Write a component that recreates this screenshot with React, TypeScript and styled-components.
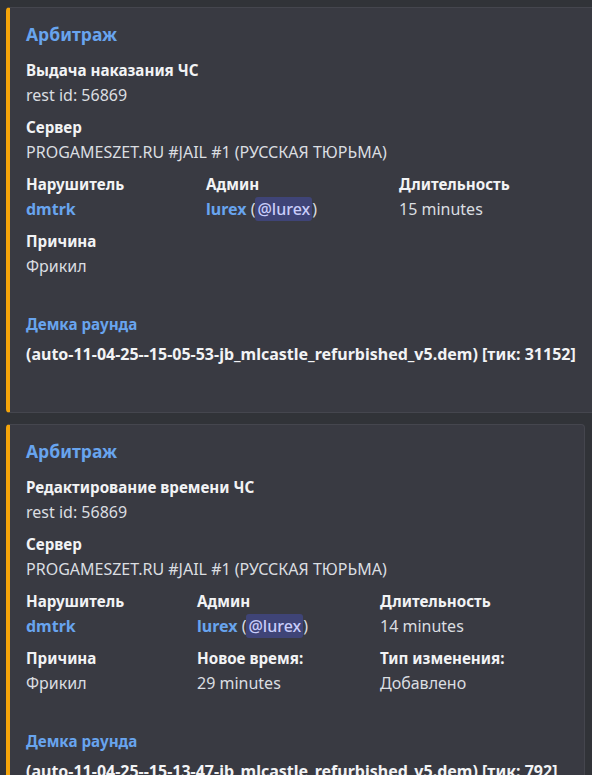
import React from 'react'
import styled, { createGlobalStyle } from 'styled-components'

const GlobalStyle = createGlobalStyle`
  html, body {
    margin: 0;
    padding: 0;
    background: #313338;
    overflow: hidden;
  }
  body {
    font-family: "Noto Sans", "Liberation Sans", sans-serif;
    -webkit-font-smoothing: antialiased;
  }
`

const Feed = styled.main`
  display: flex;
  flex-direction: column;
  gap: 11px;
  padding: 7px 7px 0 6px;
  width: 592px;
  box-sizing: border-box;
`

const Embed = styled.article<{ $width?: number }>`
  box-sizing: border-box;
  width: ${(p) => (p.$width ? `${p.$width}px` : '100%')};
  flex-shrink: 0;
  background: #393a42;
  border: 1px solid #45464e;
  border-left: 4px solid #f5a50a;
  border-radius: 4px;
  padding: 14px 16px 47px 16px;
`

const Title = styled.div`
  font-size: 17.5px;
  line-height: 24px;
  font-weight: 700;
  color: #68a4ee;
  margin-bottom: 13px;
`

const Fields = styled.div<{ $cols: string }>`
  display: grid;
  grid-template-columns: ${(p) => p.$cols};
  row-gap: 10px;
`

const Field = styled.div<{ $full?: boolean }>`
  grid-column: ${(p) => (p.$full ? '1 / -1' : 'auto')};
  min-width: 0;
`

const Name = styled.div<{ $link?: boolean }>`
  font-size: 15.2px;
  line-height: 22px;
  font-weight: 700;
  color: ${(p) => (p.$link ? '#68a4ee' : '#f2f3f5')};
  white-space: nowrap;
`

const Value = styled.div<{ $strong?: boolean; $gap?: number }>`
  margin-top: ${(p) => p.$gap ?? 3}px;
  font-size: 16px;
  line-height: 22px;
  font-weight: ${(p) => (p.$strong ? 700 : 400)};
  color: ${(p) => (p.$strong ? '#f2f3f5' : '#dbdee1')};
  white-space: nowrap;
`

const Link = styled.span`
  color: #68a4ee;
  font-weight: 700;
`

const Mention = styled.span`
  padding: 1px 2px;
  border-radius: 3px;
  background: #3f4477;
  color: #c9cdfb;
  font-weight: 500;
`

const Demo = styled.section`
  margin-top: 36px;
`

type FieldData = { name: string; value: React.ReactNode }

const adminValue = (
  <>
    <Link>lurex</Link> (<Mention>@lurex</Mention>)
  </>
)

const server = 'PROGAMESZET.RU #JAIL #1 (РУССКАЯ ТЮРЬМА)'

interface CardProps {
  width?: number
  cols: string
  action: string
  inline: FieldData[]
  demo: string
}

const ArbitrationCard: React.FC<CardProps> = ({ width, cols, action, inline, demo }) => (
  <Embed $width={width}>
    <Title>Арбитраж</Title>
    <Fields $cols={cols}>
      <Field $full>
        <Name>{action}</Name>
        <Value>rest id: 56869</Value>
      </Field>
      <Field $full>
        <Name>Сервер</Name>
        <Value>{server}</Value>
      </Field>
      {inline.map((f, i) => (
        <Field key={i}>
          <Name>{f.name}</Name>
          <Value>{f.value}</Value>
        </Field>
      ))}
    </Fields>
    <Demo>
      <Name $link>Демка раунда</Name>
      <Value $strong $gap={8}>{demo}</Value>
    </Demo>
  </Embed>
)

const App: React.FC = () => (
  <>
    <GlobalStyle />
    <Feed>
      <ArbitrationCard
        width={610}
        cols="180px 193px 1fr"
        action="Выдача наказания ЧС"
        inline={[
          { name: 'Нарушитель', value: <Link>dmtrk</Link> },
          { name: 'Админ', value: adminValue },
          { name: 'Длительность', value: '15 minutes' },
          { name: 'Причина', value: 'Фрикил' },
        ]}
        demo="(auto-11-04-25--15-05-53-jb_mlcastle_refurbished_v5.dem) [тик: 31152]"
      />
      <ArbitrationCard
        cols="171px 183px 1fr"
        action="Редактирование времени ЧС"
        inline={[
          { name: 'Нарушитель', value: <Link>dmtrk</Link> },
          { name: 'Админ', value: adminValue },
          { name: 'Длительность', value: '14 minutes' },
          { name: 'Причина', value: 'Фрикил' },
          { name: 'Новое время:', value: '29 minutes' },
          { name: 'Тип изменения:', value: 'Добавлено' },
        ]}
        demo="(auto-11-04-25--15-13-47-jb_mlcastle_refurbished_v5.dem) [тик: 792]"
      />
    </Feed>
  </>
)

export default App
